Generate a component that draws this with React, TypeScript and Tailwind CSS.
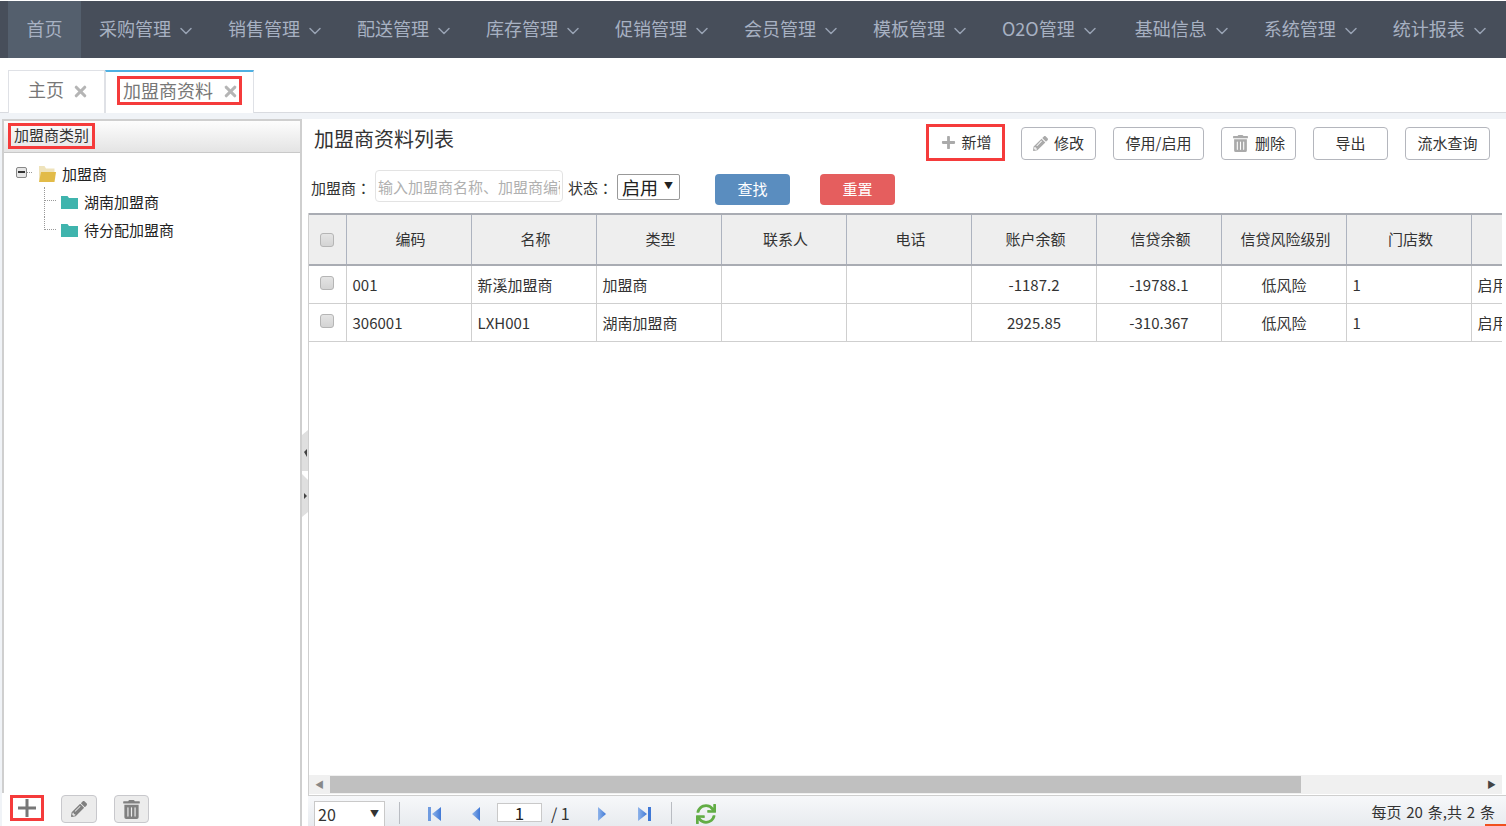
import React from "react";
import { ChevronDown, X } from "lucide-react";
import { FaPlus, FaPencilAlt, FaTrashAlt, FaSync } from "react-icons/fa";

const menus = ["采购管理", "销售管理", "配送管理", "库存管理", "促销管理", "会员管理", "模板管理", "O2O管理", "基础信息", "系统管理", "统计报表"];
const headers = ["编码", "名称", "类型", "联系人", "电话", "账户余额", "信贷余额", "信贷风险级别", "门店数", ""];
const rows = [
  ["001", "新溪加盟商", "加盟商", "", "", "-1187.2", "-19788.1", "低风险", "1", "启用"],
  ["306001", "LXH001", "湖南加盟商", "", "", "2925.85", "-310.367", "低风险", "1", "启用"],
];
const centered = [5, 6, 7];

function Folder({ open }: { open?: boolean }) {
  if (open) {
    return (
      <svg width="18" height="16" viewBox="0 0 18 16" className="shrink-0">
        <path d="M1 16V0h5.500l1.500 2.500h8.500V6H4z" fill="#efe3bb" />
        <path d="M3 6h15l-1.500 10H1z" fill="#e2bb48" />
      </svg>
    );
  }
  return (
    <svg width="17" height="13" viewBox="0 0 17 13" className="shrink-0">
      <path d="M0 0h6.500l1.500 2h9v11H0z" fill="#3fb4ad" />
    </svg>
  );
}

function Check() {
  return <span className="block w-[14px] h-[14px] rounded-[3px] border border-[#b5b5b5] bg-gradient-to-b from-[#e4e4e4] to-[#d4d4d4]" />;
}

function ToolBtn({ children, w }: { children: React.ReactNode; w: string }) {
  return (
    <button className={`${w} h-[33px] flex items-center justify-center gap-[6px] rounded-[4px] border border-[#b4b6bd] bg-white text-[15px] text-[#333]`}>
      {children}
    </button>
  );
}

function SideBtn({ children, w }: { children: React.ReactNode; w: string }) {
  return (
    <button className={`${w} h-[28px] flex items-center justify-center rounded-[4px] border border-[#c8c8cc] bg-[#ececec] text-[#808080]`}>
      {children}
    </button>
  );
}

function PageArrow({ dir, bar }: { dir: "l" | "r"; bar?: boolean }) {
  const id = `pg${dir}${bar ? "b" : "a"}`;
  return (
    <svg width="14" height="16" viewBox="0 0 14 16" className="shrink-0">
      <defs>
        <linearGradient id={id} x1="0" x2="1" y1="0" y2="0">
          <stop offset="0" stopColor="#8fb4ea" />
          <stop offset="1" stopColor="#3f78d6" />
        </linearGradient>
      </defs>
      {dir === "l" ? (
        <>
          {bar && <rect x="0" y="1" width="3" height="14" fill="#6f9be0" />}
          <path d={bar ? "M13 1v14L4 8z" : "M11 1v14L3 8z"} fill={`url(#${id})`} />
        </>
      ) : (
        <>
          {bar && <rect x="11" y="1" width="3" height="14" fill="#3f78d6" />}
          <path d={bar ? "M1 1v14l9-7z" : "M3 1v14l8-7z"} fill={`url(#${id})`} />
        </>
      )}
    </svg>
  );
}

function Colon() {
  return <span className="font-['Noto_Sans_CJK_TC']">：</span>;
}

export default function App() {
  return (
    <div className="h-[826px] w-[1506px] overflow-hidden bg-white flex flex-col text-[#333] relative" style={{ fontFamily: '"Noto Sans CJK SC", "Open Sans", sans-serif' }}>
      {/* top nav */}
      <nav className="mt-px h-[57px] shrink-0 bg-[#474e5a] flex pl-2 text-[18px] text-[#a7b1c2]">
        <a className="w-[73px] shrink-0 bg-[#545f6d] flex items-center justify-center pb-[2px]">首页</a>
        {menus.map((m) => (
          <a key={m} className={`flex items-center pl-[18px] pb-[2px] whitespace-nowrap shrink-0 ${m === "O2O管理" ? "pr-[17px]" : "pr-[14px]"}`}>
            {m}
            <ChevronDown size={20} strokeWidth={1.8} className="ml-[5px] mt-[5px] text-[#98a2b3]" />
          </a>
        ))}
      </nav>

      {/* tabs */}
      <div className="mt-3 h-[43px] shrink-0 flex pl-2 border-b border-[#d9dbe0]">
        <div className="w-[97px] h-[43px] border border-[#dfe1e6] border-b-0 bg-white flex items-center justify-center gap-[8px] pl-[4px] pb-[5px] text-[18px] text-[#777]">
          主页
          <X size={17} strokeWidth={4.4} className="text-[#b5b5b5] mt-[3px]" />
        </div>
        <div className="w-[149px] h-[43px] border-x border-[#dfe1e6] border-t-2 border-t-[#4fb0e2] bg-white flex items-center justify-center">
          <span className="outline-[3px] outline-[#f53b3b] -outline-offset-[3px] w-[125px] h-[29px] mb-[4px] flex items-center justify-center gap-[9px] pl-[3px] text-[18px] text-[#777]">
            加盟商资料
            <X size={17} strokeWidth={4.4} className="text-[#b5b5b5] mt-[2px]" />
          </span>
        </div>
      </div>

      {/* body */}
      <div className="flex-1 min-h-0 bg-[#f0f3f7] pt-[6px] flex">
        <aside className="ml-[2px] w-[300px] h-full bg-white border-t-2 border-r-2 border-[#cfcfcf] flex flex-col shrink-0">
          <div className="flex-1 min-h-0 border-l-2 border-[#cfcfcf]">
            <div className="h-[32px] border-b border-[#c9c9c9] bg-gradient-to-b from-[#fdfdfd] to-[#e4e4e4] flex items-center pl-1">
              <span className="w-[87px] h-[26px] -mt-[2px] outline-[3px] outline-[#f53b3b] -outline-offset-[3px] flex items-center justify-center text-[15px] text-[#333]">加盟商类别</span>
            </div>
            <div className="pt-[7px] pl-[12px] text-[15px] text-[#222]">
              <div className="flex items-center h-[28px]">
                <span className="w-[11px] h-[11px] rounded-[2px] border border-[#888] bg-[#e6e6e6] flex items-center justify-center -mt-[4px]">
                  <span className="w-[7px] h-[2px] bg-[#333]" />
                </span>
                <span className="w-[5px] border-b border-dotted border-[#999] -mt-[4px] mr-[6px]" />
                <Folder open />
                <span className="ml-[6px]">加盟商</span>
              </div>
              <div className="flex items-center h-[28px] pl-[28px]">
                <span className="w-[12px] h-[28px] border-l border-dotted border-[#999] flex items-center -mt-[3px]">
                  <span className="block w-full border-b border-dotted border-[#999]" />
                </span>
                <span className="ml-[5px]"><Folder /></span>
                <span className="ml-[6px]">湖南加盟商</span>
              </div>
              <div className="flex items-center h-[28px] pl-[28px]">
                <span className="w-[12px] h-[14px] border-l border-b border-dotted border-[#999] -mt-[14px]" />
                <span className="ml-[5px]"><Folder /></span>
                <span className="ml-[6px]">待分配加盟商</span>
              </div>
            </div>
          </div>
          <div className="h-[33px] shrink-0 flex gap-[17px] pl-[8px] pt-[2px]">
            <span className="w-[34px] h-[26px] outline-[3px] outline-[#f53b3b] -outline-offset-[3px] flex items-center justify-center">
              <svg width="18" height="18" viewBox="0 0 18 18" className="text-[#777]">
                <path d="M7.500 0h3v7.500H18v3h-7.500V18h-3v-7.500H0v-3h7.500z" fill="currentColor" />
              </svg>
            </span>
            <SideBtn w="w-[36px]"><FaPencilAlt size={16} /></SideBtn>
            <SideBtn w="w-[35px]"><FaTrashAlt size={19} /></SideBtn>
          </div>
        </aside>

        {/* splitter */}
        <div className="w-[6px] bg-white shrink-0 relative">
          <svg width="6" height="88" viewBox="0 0 6 88" className="absolute left-0 top-[311px]">
            <path d="M6 0v41H0V5z" fill="#dfdfdf" />
            <path d="M2 22l3-3v8z" fill="#444" />
            <path d="M0 44l6 6v32l-6 5z" fill="#dfdfdf" />
            <path d="M2 63l3 3-3 3z" fill="#444" />
          </svg>
        </div>

        {/* right */}
        <main className="flex-1 min-w-0 bg-white flex flex-col">
          <div className="h-[48px] shrink-0 flex items-start justify-between pr-4 pl-[6px]">
            <h1 className="text-[20px] leading-[40px] text-[#333]">加盟商资料列表</h1>
            <div className="flex gap-[17px] mt-[8px]">
              <button className="w-[73px] h-[31px] mr-[2px] pl-[2px] flex items-center justify-center gap-[5px] text-[15px] text-[#333] bg-white outline-[3px] outline-[#f53b3b]">
                <FaPlus size={15} className="text-[#aaa]" />新增
              </button>
              <ToolBtn w="w-[75px]"><FaPencilAlt size={15} className="text-[#aaa]" />修改</ToolBtn>
              <ToolBtn w="w-[91px]">停用/启用</ToolBtn>
              <ToolBtn w="w-[75px]"><FaTrashAlt size={17} className="text-[#aaa]" />删除</ToolBtn>
              <ToolBtn w="w-[75px]">导出</ToolBtn>
              <ToolBtn w="w-[85px]">流水查询</ToolBtn>
            </div>
          </div>

          <div className="h-[44px] shrink-0 flex items-start pl-[3px] text-[15px] text-[#333]">
            <span className="w-[64px] mt-[10px] leading-[22px] whitespace-nowrap">加盟商<Colon /></span>
            <input
              readOnly
              placeholder="输入加盟商名称、加盟商编码"
              className="w-[188px] h-[32px] mt-[3px] border border-[#e3e3e3] rounded-[4px] px-[2px] text-[15px] placeholder:text-[#b0b0b0] outline-none"
            />
            <span className="ml-[5px] w-[49px] mt-[10px] leading-[22px] whitespace-nowrap">状态<Colon /></span>
            <span className="w-[63px] h-[26px] mt-[7px] border border-[#999] rounded-[2px] flex items-center pl-[4px] text-[18px] text-[#222]">
              启用
              <span className="ml-[6px] -mt-[3px] text-[9px] text-[#222]">▼</span>
            </span>
            <button className="ml-[35px] w-[75px] h-[31px] mt-[7px] rounded-[4px] bg-[#5a8dbf] text-white text-[15px]">查找</button>
            <button className="ml-[30px] w-[75px] h-[31px] mt-[7px] rounded-[4px] bg-[#e55e5e] text-white text-[15px]">重置</button>
          </div>

          <div className="flex-1 min-h-0 mt-[2px] mr-1 border-l border-[#cfcfcf] overflow-hidden flex flex-col">
            <div className="flex-1 min-h-0 overflow-hidden">
              <table className="table-fixed border-collapse w-[1287px] text-[15px] text-[#333]">
                <colgroup>
                  <col className="w-[37px]" />
                  {headers.map((_, i) => <col key={i} className="w-[125px]" />)}
                </colgroup>
                <thead>
                  <tr className="h-[51px] bg-[#eeeeee] border-t-2 border-t-[#a9acb3] border-b-2 border-b-[#a9acb3]">
                    <th className="border-r border-[#adb3bf] font-normal"><span className="flex justify-center"><Check /></span></th>
                    {headers.map((h, i) => (
                      <th key={i} className="border-r border-[#adb3bf] font-normal text-center pl-[4px]">{h}</th>
                    ))}
                  </tr>
                </thead>
                <tbody>
                  {rows.map((r, ri) => (
                    <tr key={r[0]} className="h-[38px] border-b border-[#cfcfcf]">
                      <td className="border-r border-[#cfcfcf] align-top pt-[10px]"><span className="flex justify-center"><Check /></span></td>
                      {r.map((c, i) => (
                        <td key={i} className={`border-r border-[#cfcfcf] pl-[6px] pr-[5px] whitespace-nowrap overflow-hidden ${ri === 1 ? "pt-[3px]" : "pt-[1px]"} ${centered.includes(i) ? "text-center" : "text-left"}`}>
                          {c}
                        </td>
                      ))}
                    </tr>
                  ))}
                </tbody>
              </table>
            </div>
            <div className="h-[19px] shrink-0 bg-[#f0f0f0] flex items-center mb-[1px]">
              <span className="w-[21px] flex justify-center text-[#888] text-[9px]">◀</span>
              <div className="w-[971px] h-[17px] bg-[#c0c0c0]" />
              <span className="flex-1" />
              <span className="w-[21px] flex justify-center text-[#444] text-[9px]">▶</span>
            </div>
          </div>

          {/* pagination */}
          <div className="h-[31px] shrink-0 border-t border-[#cfcfcf] bg-gradient-to-b from-[#f7f8fa] to-[#e8ebef] flex items-center pl-[6px] pr-[11px] text-[15px] text-[#333]">
            <span className="w-[71px] h-[26px] mt-[6px] border border-[#c9c9c9] bg-white flex items-center justify-between pl-[3px] pr-[5px] text-[16px]">
              20<span className="text-[9px] text-[#333]">▼</span>
            </span>
            <span className="ml-[14px] w-px h-[22px] bg-[#b9bcc2] mt-[4px]" />
            <span className="ml-[28px] mt-[6px]"><PageArrow dir="l" bar /></span>
            <span className="ml-[27px] mt-[6px]"><PageArrow dir="l" /></span>
            <span className="ml-[14px] w-[45px] h-[19px] mt-[3px] border border-[#c9c9c9] bg-white flex items-center justify-center text-[17px] text-[#222]">1</span>
            <span className="ml-[9px] mt-[4px] text-[16px]">/ 1</span>
            <span className="ml-[25px] mt-[6px]"><PageArrow dir="r" /></span>
            <span className="ml-[28px] mt-[6px]"><PageArrow dir="r" bar /></span>
            <span className="ml-[20px] w-px h-[22px] bg-[#b9bcc2] mt-[4px]" />
            <FaSync size={20} className="ml-[24px] mt-[6px] text-[#62ad45]" />
            <span className="ml-auto mt-[3px] [word-spacing:1.5px]">每页 20 条,共 2 条</span>
          </div>
        </main>
      </div>
      <span className="absolute right-0 bottom-0 w-[21px] h-[2px] bg-[#f0501e]" />
    </div>
  );
}
